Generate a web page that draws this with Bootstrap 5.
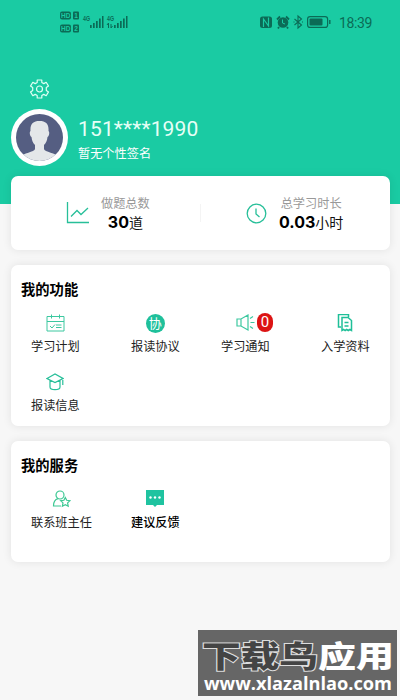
<!DOCTYPE html>
<html lang="zh-CN">
<head>
<meta charset="utf-8">
<meta name="viewport" content="width=device-width, initial-scale=1">
<title>我的</title>
<link href="https://cdn.jsdelivr.net/npm/bootstrap@5.3.0/dist/css/bootstrap.min.css" rel="stylesheet">
<style>
body{width:400px;height:700px;overflow:hidden;background:#f7f7f7;font-family:"Noto Sans CJK SC",sans-serif;font-size:12.2px;color:#222;line-height:18px}
svg{display:block;flex:none}
.hero{height:204px;background:#1acba3;padding:0 0 0 11px}
.status-bar{height:45px;padding:10px 28px 0 48px;color:#0b6b56}
.status-bar .clock{font:14px/26px Roboto,sans-serif;letter-spacing:-.35px;margin-left:7px}
.gear{margin:34px 0 0 18px}
.avatar-ring{width:57px;height:57px;background:#fff;padding:5px;margin-top:10px}
.identity{padding:18px 0 0 10px}
.phone-no{font:21px/24px Roboto,sans-serif;color:#e6fff6;letter-spacing:.15px;margin-bottom:3px}
.panel{border:0;border-radius:7px;box-shadow:0 0 10px rgba(0,0,0,.09);margin:0 10px 0 11px}
.stats{height:74px;margin-top:-28px}
.stats .caption{color:#999}
.stats .figure{font-size:14px;line-height:20px;color:#111}
.stats .figure b{font:700 16px/20px Inter,sans-serif;color:#000}
.stat-a{padding-left:55px;width:189px}
.stat-a .stat-text{margin-left:11px}
.stat-b{padding-left:45px;border-left:1px solid #f4f4f4;height:18px}
.stat-b .stat-text{margin-left:12px}
.functions{height:161px;margin-top:15px}
.services{height:121px;margin-top:15px}
.heading{font-size:14.3px;line-height:20px;font-weight:700;color:#000;padding:14px 0 0 10px;margin:0}
.tiles{display:grid;grid-template-columns:100px 90px 100px 69px;row-gap:17px;padding:15px 0 0 20px;justify-items:start}
.tile{height:42px;line-height:18px;white-space:nowrap}
.icon-box{height:20px;margin-bottom:3px}
.count{left:21px;top:-1px;width:16px;height:19px;border-radius:8px;background:#dc1414;color:#fff;font:15px/19px Roboto,sans-serif;text-align:center}
.xie{width:19px;height:19px;background:#1fc09b;color:#fff;font-size:13px;line-height:18px}
.watermark{right:3px;bottom:4px;width:199px;height:66px;background:#666;color:#fff}
.watermark .brand{font-family:"Noto Sans CJK SC",sans-serif;font-weight:900}
.watermark .site{font-family:"Open Sans","Noto Sans",sans-serif;font-weight:700}
</style>
</head>
<body class="position-relative">
<header class="hero">
  <div class="status-bar d-flex align-items-start justify-content-between">
    <svg width="72" height="24" fill="currentColor">
      <rect x="1" y="1.500" width="11" height="8" rx="2"/><rect x="14" y="1.500" width="6" height="8" rx="1"/>
      <rect x="1" y="14.500" width="11" height="8" rx="2"/><rect x="14" y="14.500" width="6" height="8" rx="1"/>
      <g fill="#1acba3" font-family="Liberation Sans,sans-serif" font-weight="700" font-size="6.500"><text x="2" y="8">HD</text><text x="15.200" y="8">1</text><text x="2" y="21">HD</text><text x="15.200" y="21">2</text></g>
      <g font-family="Liberation Sans,sans-serif" font-weight="700" font-size="7"><text x="24" y="11" textLength="7" lengthAdjust="spacingAndGlyphs">4G</text><text x="48" y="11" textLength="7" lengthAdjust="spacingAndGlyphs">4G</text></g>
      <path d="M31 15h1.700v3H31zM34 13h1.700v5H34zM37 11h1.700v7H37zM40 8.500h1.700v9.500H40zM43 6h1.500v12H43zM55 15h1.700v3H55zM58 13h1.700v5H58zM61 11h1.700v7H61zM64 8.500h1.700v9.500H64zM67 6h1.500v12H67z"/>
      <path d="M49.500 18v-5l-1.500 2m4-1v4l1.500-2" fill="none" stroke="currentColor"/>
    </svg>
    <div class="d-flex">
      <svg width="73" height="24" viewBox="0 0 73 24" fill="none" stroke="currentColor">
        <rect x="1" y="6.500" width="12" height="11.500" rx="2.500" fill="currentColor" stroke="none"/>
        <path d="M4.500 17V9l5 7V7.500" stroke="#1acba3" stroke-width="1.200"/>
        <circle cx="24" cy="12.500" r="5.300" fill="currentColor" stroke="none"/><path d="M18 9.500l3-3M30 9.500l-3-3M20 17l-1 1.500M28 17l1 1.500" stroke-width="1.800"/><path d="M23.500 9.500v3.500l2.500 1" stroke="#1acba3"/>
        <path d="M35.500 9l7 6-3.500 3V6l3.500 3-7 6M34.500 12h1M43 12h1" stroke-width="1.100"/>
        <rect x="48.600" y="6.600" width="20" height="10.800" rx="2.500" stroke-width="1.200"/><rect x="50.500" y="8.500" width="13" height="7" rx="1" fill="currentColor" stroke="none"/><path d="M70.800 10v4" stroke-width="1.400"/>
      </svg>
      <span class="clock">18:39</span>
    </div>
  </div>
  <svg class="gear" width="21" height="20" viewBox="0 0 21 20" fill="none" stroke="#e0fff4" stroke-width="1.200" stroke-linejoin="round"><path d="M8.200 1h4.600v2.500l2 1.100 2.400-1.300 2.300 3.800-2.200 1.500v2.800l2.200 1.500-2.300 3.800-2.400-1.300-2 1.100V19H8.200v-2.500l-2-1.100-2.400 1.300-2.300-3.800 2.200-1.500V8.600L1.500 7.100l2.300-3.800 2.400 1.300 2-1.100z"/><circle cx="10.500" cy="10" r="3"/></svg>
  <div class="d-flex">
    <div class="avatar-ring rounded-circle">
      <svg width="47" height="47" viewBox="0 0 47 47"><defs><clipPath id="face"><circle cx="23.500" cy="23.500" r="23.500"/></clipPath></defs><g clip-path="url(#face)"><path fill="#555e82" d="M0 0h47v47H0z"/><path fill="#e4e7e9" d="M14.500 17C14 10 17 7 23.500 7S33 10 32.500 17c1.500 1 .5 5-1 6-.5 4-1.500 6-3.500 8v4c0 3 13 4 14 8v6H5v-6c1-4 14-5 14-8v-4c-2-2-3-4-3.500-8-1.500-1-2.500-5-1-6z"/></g></svg>
    </div>
    <div class="identity text-white">
      <div class="phone-no">151****1990</div>
      <div>暂无个性签名</div>
    </div>
  </div>
</header>
<main>
  <section class="card panel stats flex-row align-items-center">
    <div class="stat-a d-flex align-items-center">
      <svg width="24" height="22" fill="none" stroke="#27bf99" stroke-width="1.300"><path d="M1.500 0v20.500H23M5 14.500l6-6 4 4L22 6"/></svg>
      <div class="stat-text text-center"><div class="caption">做题总数</div><div class="figure"><b>30</b>道</div></div>
    </div>
    <div class="stat-b d-flex align-items-center">
      <svg width="21" height="21" fill="none" stroke="#27bf99" stroke-width="1.300"><circle cx="10.500" cy="10.500" r="9.300"/><path d="M10 5.500V11l3.500 3"/></svg>
      <div class="stat-text text-center"><div class="caption">总学习时长</div><div class="figure"><b>0.03</b>小时</div></div>
    </div>
  </section>
  <section class="card panel functions">
    <h2 class="heading">我的功能</h2>
    <div class="tiles">
      <div class="tile d-flex flex-column align-items-center"><div class="icon-box"><svg width="19" height="18" fill="none" stroke="#3cc8a0"><path d="M1 2.500h17v14.500H1zM1 7.500h17M5.500.500v4M13.500.500v4M4 12l2 2 3-3.500M10 11h5.500M10 13.500h5.500"/></svg></div>学习计划</div>
      <div class="tile d-flex flex-column align-items-center"><div class="icon-box"><div class="xie rounded-circle text-center">协</div></div>报读协议</div>
      <div class="tile d-flex flex-column align-items-center"><div class="icon-box position-relative"><svg width="19" height="19" fill="none" stroke="#3cc8a0" stroke-width="1.200"><path d="M1 5h4l7-4v15l-7-4H1zM5 5v7M14 4.500l3-2M14.500 8.500h4M14 12.500l3 2"/></svg><span class="count position-absolute">0</span></div>学习通知</div>
      <div class="tile d-flex flex-column align-items-center"><div class="icon-box"><svg width="16" height="19" viewBox="0 1 16 19" fill="none" stroke="#1fbf98" stroke-width="1.500"><path d="M4 14H1.500V1.500h10V4"/><path d="M5 4.500h6l3.500 3V17.500l-1.600-1-1.600 1-1.600-1-1.600 1-1.500-1-1.600 1zM7.500 9.500h4M7.500 13h4"/></svg></div>入学资料</div>
      <div class="tile d-flex flex-column align-items-center"><div class="icon-box"><svg width="18" height="18" fill="none" stroke="#27bf99" stroke-width="1.200"><path d="M1 5.500l8-4.500 8 4.500-8 4zM4 7.500V14c0 3.500 10 3.500 10 0V7.500M16.800 5.500V12"/></svg></div>报读信息</div>
    </div>
  </section>
  <section class="card panel services">
    <h2 class="heading">我的服务</h2>
    <div class="tiles">
      <div class="tile d-flex flex-column align-items-center"><div class="icon-box"><svg width="19" height="18" fill="none" stroke="#3cc893" stroke-width="1.200"><circle cx="8" cy="5" r="4"/><path d="M9 16H1.500c0-4 1.500-6.500 4.500-7.300M13.300 7.500l1.400 2.800 3.200.4-2.300 2.200.6 3.300-2.900-1.600-2.900 1.600.6-3.300-2.300-2.200 3.200-.4z"/></svg></div>联系班主任</div>
      <div class="tile d-flex flex-column align-items-center fw-medium text-black"><div class="icon-box"><svg width="20" height="18"><path fill="#1fc3a0" d="M1 0h18v15h-7l-2 2-2-2H1z"/><g fill="#fff"><circle cx="5.500" cy="7.500" r="1.200"/><circle cx="10" cy="7.500" r="1.200"/><circle cx="14.500" cy="7.500" r="1.200"/></g></svg></div>建议反馈</div>
    </div>
  </section>
</main>
<div class="watermark position-absolute">
  <svg width="199" height="66"><g class="brand" font-size="30"><text x="4" y="37" textLength="116" lengthAdjust="spacingAndGlyphs" fill="#444" stroke="#ddd" stroke-width="2" paint-order="stroke">下载鸟</text><text x="120" y="37" textLength="76" lengthAdjust="spacingAndGlyphs" fill="#fff">应用</text></g><text class="site" x="6" y="60" font-size="17" textLength="188" lengthAdjust="spacingAndGlyphs" fill="#fff">www.xlazalnlao.com</text></svg>
</div>
<script src="https://cdn.jsdelivr.net/npm/bootstrap@5.3.0/dist/js/bootstrap.bundle.min.js"></script>
</body>
</html>
